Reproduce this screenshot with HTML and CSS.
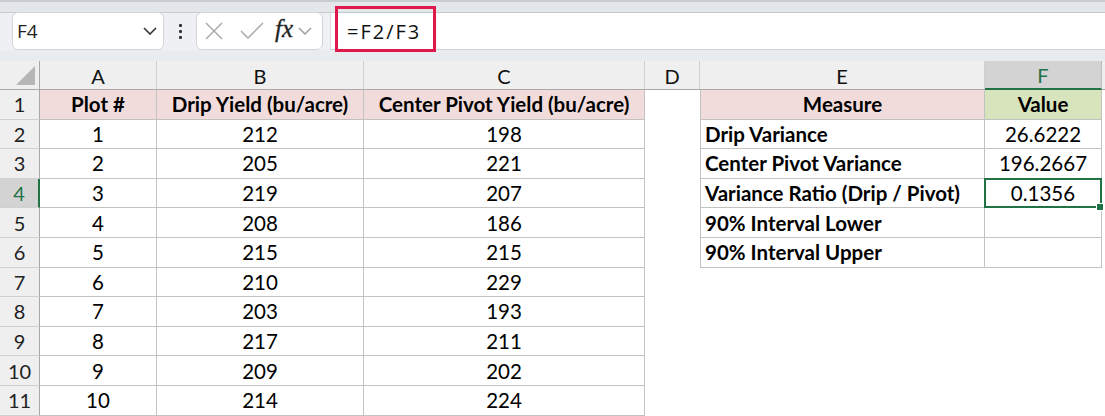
FILE: index.html
```html
<!DOCTYPE html>
<html>
<head>
<meta charset="utf-8">
<link rel="stylesheet" href="styles.css">
</head>
<body>
<div class="app">
  <div class="top-strip"></div>
  <div class="fbar">
    <div class="fbar-left">
      <div class="namebox">
        <span class="name-text">F4</span>
        <svg class="chev" width="14" height="8" viewBox="0 0 14 8"><path d="M1 1 L7 7 L13 1" fill="none" stroke="#333" stroke-width="1.6"/></svg>
      </div>
      <div class="dots"><span></span><span></span><span></span></div>
      <div class="btnbox">
        <svg class="ico-x" width="20" height="20" viewBox="0 0 20 20"><path d="M2 2 L18 18 M18 2 L2 18" stroke="#a6a6a6" stroke-width="1.4" fill="none"/></svg>
        <svg class="ico-check" width="24" height="18" viewBox="0 0 24 18"><path d="M1 9 L8 16 L23 1" stroke="#a6a6a6" stroke-width="1.4" fill="none"/></svg>
        <span class="fx">fx</span>
        <svg class="chev-s" width="14" height="8" viewBox="0 0 14 8"><path d="M1 1 L7 7 L13 1" fill="none" stroke="#9a9a9a" stroke-width="1.4"/></svg>
      </div>
    </div>
    <div class="fbar-input">
      <span class="formula">=F2/F3</span>
      <div class="highlight"></div>
    </div>
  </div>
  <div class="gap-row"></div>
  <div class="sheet">
    <div class="corner"><div class="tri"></div></div>
    <div class="ch">A</div><div class="ch">B</div><div class="ch">C</div><div class="ch">D</div><div class="ch">E</div><div class="ch ch-sel">F</div><div class="ch ch-end"></div>

    <div class="rh">1</div>
    <div class="c t hd">Plot #</div><div class="c t hd">Drip Yield (bu/acre)</div><div class="c t hd">Center Pivot Yield (bu/acre)</div><div class="c d"></div><div class="c e hd">Measure</div><div class="c f hdg">Value</div><div class="c x"></div>

    <div class="rh">2</div>
    <div class="c t">1</div><div class="c t">212</div><div class="c t">198</div><div class="c d"></div><div class="c e lbl">Drip Variance</div><div class="c f">26.6222</div><div class="c x"></div>

    <div class="rh">3</div>
    <div class="c t">2</div><div class="c t">205</div><div class="c t">221</div><div class="c d"></div><div class="c e lbl">Center Pivot Variance</div><div class="c f">196.2667</div><div class="c x"></div>

    <div class="rh rh-sel">4</div>
    <div class="c t">3</div><div class="c t">219</div><div class="c t">207</div><div class="c d"></div><div class="c e lbl">Variance Ratio (Drip / Pivot)</div><div class="c f sel">0.1356<span class="handle"></span></div><div class="c x"></div>

    <div class="rh">5</div>
    <div class="c t">4</div><div class="c t">208</div><div class="c t">186</div><div class="c d"></div><div class="c e lbl">90% Interval Lower</div><div class="c f"></div><div class="c x"></div>

    <div class="rh">6</div>
    <div class="c t">5</div><div class="c t">215</div><div class="c t">215</div><div class="c d"></div><div class="c e lbl">90% Interval Upper</div><div class="c f"></div><div class="c x"></div>

    <div class="rh">7</div>
    <div class="c t">6</div><div class="c t">210</div><div class="c t">229</div><div class="c d"></div><div class="c n"></div><div class="c n"></div><div class="c x"></div>

    <div class="rh">8</div>
    <div class="c t">7</div><div class="c t">203</div><div class="c t">193</div><div class="c d"></div><div class="c n"></div><div class="c n"></div><div class="c x"></div>

    <div class="rh">9</div>
    <div class="c t">8</div><div class="c t">217</div><div class="c t">211</div><div class="c d"></div><div class="c n"></div><div class="c n"></div><div class="c x"></div>

    <div class="rh">10</div>
    <div class="c t">9</div><div class="c t">209</div><div class="c t">202</div><div class="c d"></div><div class="c n"></div><div class="c n"></div><div class="c x"></div>

    <div class="rh">11</div>
    <div class="c t">10</div><div class="c t">214</div><div class="c t">224</div><div class="c d"></div><div class="c n"></div><div class="c n"></div><div class="c x"></div>
  </div>
</div>
</body>
</html>
```

FILE: styles.css
```css
* { box-sizing: border-box; }
html, body { margin: 0; padding: 0; }
body {
  width: 1105px;
  height: 416px;
  overflow: hidden;
  background: #ffffff;
  font-family: Lato, "Liberation Sans", sans-serif;
  color: #000;
}
.app { width: 1105px; }

.top-strip {
  height: 13px;
  background: #e4e7ea;
  border-top: 2px solid #c9ccd0;
  border-bottom: 1px solid #c6c9cc;
}

.fbar {
  display: flex;
  height: 37px;
  background: #eef0f3;
}
.fbar-left {
  width: 330px;
  display: flex;
  align-items: stretch;
  position: relative;
}
.namebox {
  margin-left: 12px;
  margin-top: -1px;
  width: 152px;
  height: 38px;
  background: #fff;
  border: 1px solid #d3d5d8;
  border-radius: 6px;
  display: flex;
  align-items: center;
  padding-left: 4px;
  padding-right: 6px;
  position: relative;
  z-index: 1;
}
.name-text {
  font-family: "Open Sans", "Noto Sans", sans-serif;
  font-size: 19px;
  color: #222;
  flex: 1;
}
.chev { display: block; }
.dots {
  width: 32px;
  display: flex;
  flex-direction: column;
  align-items: center;
  justify-content: center;
  gap: 3px;
}
.dots span {
  width: 3px;
  height: 3px;
  background: #333;
  border-radius: 1px;
}
.btnbox {
  margin-top: -1px;
  width: 127px;
  height: 38px;
  background: #fff;
  border: 1px solid #d3d5d8;
  border-radius: 6px;
  display: flex;
  align-items: center;
  padding-left: 7px;
  position: relative;
  z-index: 1;
}
.ico-x { display: block; margin-right: 16px; }
.ico-check { display: block; margin-right: 11px; }
.fx {
  font-family: "Liberation Serif", "DejaVu Serif", serif;
  font-style: italic;
  font-size: 25px;
  color: #222;
  margin-right: 5px;
  margin-top: -4px;
  -webkit-text-stroke: 0.3px #222;
}
.chev-s { display: block; }

.fbar-input {
  flex: 1;
  background: #fff;
  border-left: 1px solid #dcdee1;
  border-bottom: 1px solid #cfd1d4;
  display: flex;
  align-items: center;
  padding-left: 16px;
  position: relative;
}
.formula {
  font-family: "Open Sans", "Noto Sans", sans-serif;
  font-size: 20px;
  color: #111;
  letter-spacing: 2px;
}
.highlight {
  position: absolute;
  left: 4px;
  top: -7px;
  width: 101px;
  height: 46px;
  border: 3px solid #e0184b;
}

.gap-row {
  height: 11px;
  background: #e9ecef;
}

.sheet {
  display: grid;
  grid-template-columns: 40px 117px 207px 281px 55px 285px 117px 3px;
  grid-template-rows: 29px repeat(11, 29.6px);
  background: #fff;
}
.corner {
  background: #efefef;
  border-right: 1px solid #a8a8a8;
  border-bottom: 1px solid #a8a8a8;
  position: relative;
}
.tri {
  position: absolute;
  right: 4px;
  bottom: 4px;
  width: 0;
  height: 0;
  border-left: 19px solid transparent;
  border-bottom: 19px solid #b6b6b6;
}
.ch {
  background: #efefef;
  border-right: 1px solid #cfcfcf;
  border-bottom: 1px solid #a8a8a8;
  display: flex;
  align-items: center;
  justify-content: center;
  font-size: 20px;
  color: #111;
  padding-top: 1px;
}
.ch-sel {
  background: #d3d3d3;
  color: #217346;
  border-bottom: 2px solid #217346;
  border-right: 1px solid #bdbdbd;
}
.ch-end { border-right: none; }
.rh {
  background: #efefef;
  border-right: 1px solid #a8a8a8;
  border-bottom: 1px solid #d0d0d0;
  display: flex;
  align-items: center;
  justify-content: center;
  font-size: 20px;
  color: #222;
}
.rh-sel {
  background: #d3d3d3;
  color: #217346;
  border-right: 2px solid #217346;
}
.c {
  display: flex;
  align-items: center;
  font-size: 20.5px;
  white-space: nowrap;
  overflow: visible;
}
.t {
  justify-content: center;
  border-right: 1px solid #c2c2c2;
  border-bottom: 1px solid #c2c2c2;
}
.hd {
  background: #f2dcdb;
  font-weight: 700;
}
.e {
  border-left: 1px solid #c2c2c2;
  border-right: 1px solid #c2c2c2;
  border-bottom: 1px solid #c2c2c2;
}
.e.hd { justify-content: center; }
.lbl {
  font-weight: 700;
  padding-left: 4px;
}
.f {
  justify-content: center;
  border-right: 1px solid #c2c2c2;
  border-bottom: 1px solid #c2c2c2;
  position: relative;
}
.hdg {
  background: #d8e4bc;
  font-weight: 700;
}
.sel {
  border: 2px solid #217346;
  margin-top: -1px;
  margin-left: -1px;
  width: calc(100% + 1px);
  height: calc(100% + 1px);
  z-index: 2;
}
.handle {
  position: absolute;
  right: -4px;
  bottom: -5px;
  width: 8px;
  height: 8px;
  background: #217346;
  border: 1px solid #fff;
}
.x { background: #fff; }
```
